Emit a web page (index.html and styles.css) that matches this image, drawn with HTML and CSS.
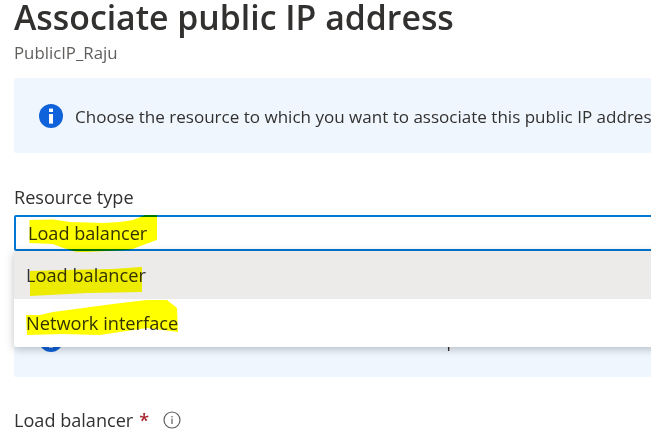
FILE: index.html
```html
<!DOCTYPE html>
<html lang="en">
<head>
<meta charset="utf-8">
<title>Associate public IP address</title>
<link rel="stylesheet" href="styles.css">
</head>
<body>
<main class="page">
  <h1 class="title">Associate public IP address</h1>
  <p class="subtitle">PublicIP_Raju</p>
  <div class="notice notice-first">
    <svg class="info-icon" viewBox="0 0 24 24"><circle cx="12" cy="12" r="12" fill="#0f62d9"/><rect x="10" y="4.6" width="4" height="3.4" fill="#fff"/><rect x="10" y="10" width="4" height="9.6" fill="#fff"/></svg>
    <span class="notice-text">Choose the resource to which you want to associate this public IP address.</span>
  </div>
  <div class="field">
    <label class="label">Resource type</label>
    <div class="select">Load balancer</div>
    <div class="menu">
      <div class="option option-selected">Load balancer</div>
      <div class="option">Network interface</div>
    </div>
  </div>
  <div class="notice notice-second">
    <svg class="info-icon" viewBox="0 0 24 24"><circle cx="12" cy="12" r="12" fill="#0f62d9"/><rect x="10" y="4.6" width="4" height="3.4" fill="#fff"/><rect x="10" y="10" width="4" height="9.6" fill="#fff"/></svg>
    <span class="notice-text">Choose the load balancer to which the current public IP.</span>
  </div>
  <div class="label-row">
    <span class="label">Load balancer</span>
    <span class="required">*</span>
    <svg class="hint-icon" viewBox="0 0 18 18"><circle cx="9" cy="9" r="8" fill="none" stroke="#605e5c" stroke-width="1.2"/><rect x="8.4" y="7.6" width="1.2" height="5.4" fill="#605e5c"/><rect x="8.4" y="5" width="1.2" height="1.4" fill="#605e5c"/></svg>
  </div>
</main>
<svg class="marker" viewBox="0 0 651 430">
  <path fill="#ffff00" d="M29.5 220 L53 219.5 L70 222 L103 223 L120 222 L133 220 L145 215 L157 215 L157 240 L143 245 L133 249 L127 250 L87 252 L77 252 L63 248 L53 244 L29.5 243Z"/>
  <path fill="#ffff00" d="M30 271 L63 270 L113 269 L140 267 L142 267 L142 292 L87 293 L30 296Z"/>
  <path fill="#ffff00" d="M26 315 L40 315 L53 312 L83 308 L113 304 L147 300 L167 300 L177 308 L178 332 L147 328 L120 332 L100 335 L63 334 L27 335Z"/>
</svg>
</body>
</html>
```
FILE: styles.css
```css
* { box-sizing: border-box; }
html, body { margin: 0; height: 100%; overflow: hidden; background: #fff; }
body { position: relative; font-family: "Open Sans", "Noto Sans", sans-serif; color: #323130; }
.page { width: 800px; padding: 0 0 0 14px; }
.title { margin: -1px 0 0; font-size: 33.8px; line-height: 36px; font-weight: 600; color: #323130; }
.subtitle { margin: 7px 0 0; font-size: 16.8px; line-height: 22px; color: #605e5c; }
.notice { display: flex; align-items: center; background: #eff6fe; border-radius: 2px; padding-left: 25px; }
.notice-first { margin-top: 14px; height: 75px; }
.notice-second { margin-top: 51px; height: 75px; }
.info-icon { width: 24px; height: 24px; flex: none; }
.notice-text { margin-left: 12px; padding-top: 2px; font-size: 17.05px; white-space: nowrap; color: #323130; }
.field { position: relative; margin-top: 32px; z-index: 2; }
.label { display: block; font-size: 18.1px; line-height: 24px; color: #323130; }
.select { margin-top: 6px; height: 36px; border: 2px solid #0078d4; border-radius: 2px; padding-left: 12px; font-size: 18.1px; line-height: 33px; color: #323130; background: #fff; }
.menu { position: absolute; left: 0; right: 0; top: 66px; background: #fff; box-shadow: 0 2px 8px rgba(0,0,0,.25); border-radius: 0 0 2px 2px; }
.option { height: 48px; padding-left: 12px; font-size: 18.2px; line-height: 48px; color: #323130; }
.option-selected { background: #ecebea; }
.label-row { display: flex; align-items: center; margin-top: 31px; }
.required { margin-left: 6px; font-size: 18px; line-height: 24px; font-weight: 600; color: #a4262c; }
.hint-icon { width: 18px; height: 18px; margin-left: 14px; }
.marker { position: absolute; left: 0; top: 0; width: 651px; height: 430px; mix-blend-mode: multiply; z-index: 3; pointer-events: none; }
```
